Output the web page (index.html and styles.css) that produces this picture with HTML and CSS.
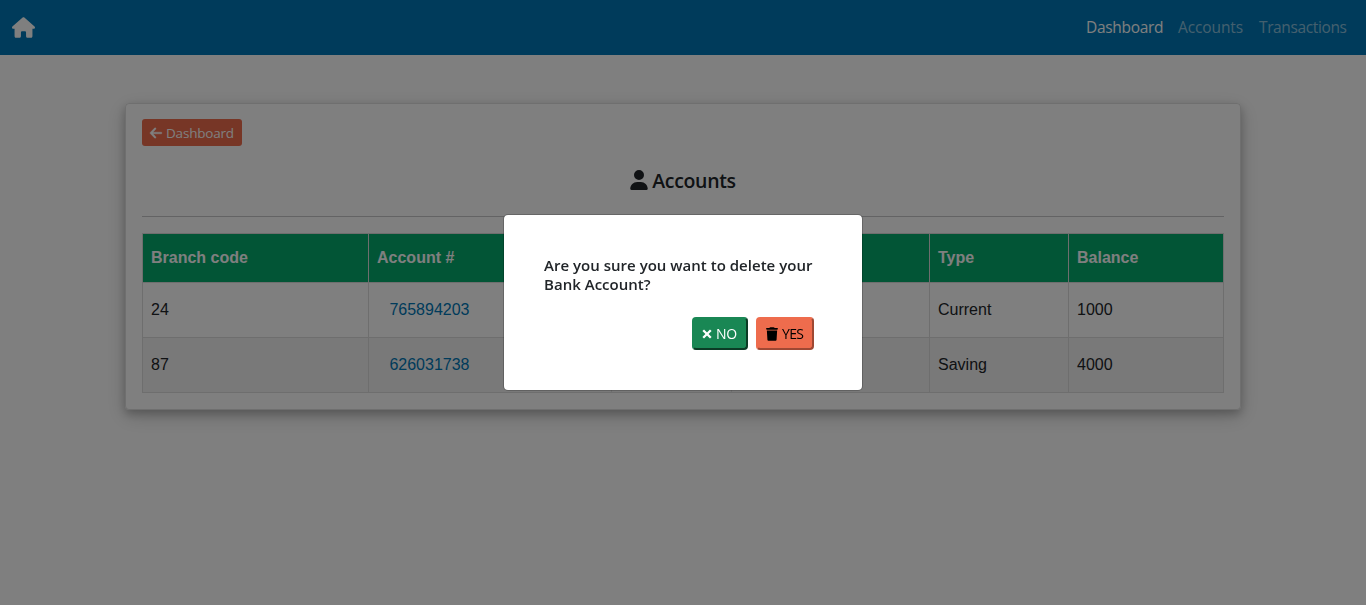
FILE: index.html
```html
<!DOCTYPE html>
<html lang="en">
<head>
<meta charset="utf-8">
<title>Accounts</title>
<link rel="stylesheet" href="styles.css">
</head>
<body>
<nav class="navbar">
  <svg class="home" viewBox="0 0 576 512" fill="currentColor"><path d="M575.8 255.5c0 18-15 32.1-32 32.1h-32l.7 160.2c0 2.7-.2 5.4-.5 8.1V472c0 22.1-17.9 40-40 40H456c-1.1 0-2.2 0-3.3-.1c-1.4 .1-2.8 .1-4.2 .1H416 392c-22.1 0-40-17.9-40-40V448 384c0-17.7-14.3-32-32-32H256c-17.7 0-32 14.3-32 32v64 24c0 22.1-17.9 40-40 40H160 128.1c-1.5 0-3-.1-4.5-.2c-1.2 .1-2.4 .2-3.6 .2H104c-22.1 0-40-17.9-40-40V360c0-.9 0-1.9 .1-2.8V287.6H32c-18 0-32-14-32-32.1c0-9 3-17 10-24L266.4 8c7-7 15-8 22-8s15 2 21 7L564.8 231.5c8 7 12 15 11 24z"/></svg>
  <div class="links">
    <a class="link active">Dashboard</a>
    <a class="link accounts">Accounts</a>
    <a class="link transactions">Transactions</a>
  </div>
</nav>
<main class="card">
  <a class="back"><svg class="arrow" viewBox="0 0 448 512" fill="currentColor"><path stroke="currentColor" stroke-width="14" d="M9.4 233.4c-12.5 12.5-12.5 32.8 0 45.3l160 160c12.5 12.5 32.8 12.5 45.3 0s12.5-32.8 0-45.3L109.2 288 416 288c17.7 0 32-14.3 32-32s-14.3-32-32-32l-306.7 0L214.6 118.6c12.5-12.5 12.5-32.8 0-45.3s-32.8-12.5-45.3 0l-160 160z"/></svg><span>Dashboard</span></a>
  <h1 class="title"><svg class="user" viewBox="0 0 448 512" fill="currentColor"><path d="M224 256a128 128 0 1 0 0-256a128 128 0 1 0 0 256zm-45.7 48C79.8 304 0 383.8 0 482.3C0 498.7 13.3 512 29.7 512H418.3c16.4 0 29.7-13.3 29.7-29.7C448 383.8 368.2 304 269.7 304H178.3z"/></svg><span>Accounts</span></h1>
  <hr class="rule">
  <table class="table">
    <colgroup><col class="c-branch"><col class="c-number"><col class="c-mid"><col class="c-wide"><col class="c-type"><col class="c-balance"></colgroup>
    <thead><tr><th>Branch code</th><th>Account #</th><th></th><th></th><th>Type</th><th>Balance</th></tr></thead>
    <tbody>
      <tr><td>24</td><td><a class="number">765894203</a></td><td></td><td></td><td>Current</td><td>1000</td></tr>
      <tr><td>87</td><td><a class="number">626031738</a></td><td></td><td></td><td>Saving</td><td>4000</td></tr>
    </tbody>
  </table>
</main>
<div class="overlay">
  <div class="modal">
    <p class="question">Are you sure you want to delete your<br>Bank Account?</p>
    <div class="actions">
      <button class="btn no"><svg class="cross" viewBox="0 0 10 10"><path d="M1.2 1.2L8.8 8.8M8.8 1.2L1.2 8.8" stroke="currentColor" stroke-width="2.3"/></svg><span>NO</span></button>
      <button class="btn yes"><svg class="trash" viewBox="0 0 448 512" fill="currentColor"><path d="M135.2 17.7L128 32H32C14.3 32 0 46.3 0 64S14.3 96 32 96H416c17.7 0 32-14.3 32-32s-14.3-32-32-32H320l-7.2-14.3C307.4 6.8 296.3 0 284.2 0H163.8c-12.1 0-23.2 6.8-28.6 17.7zM416 128H32L53.2 467c1.6 25.3 22.6 45 47.9 45H346.9c25.3 0 46.3-19.7 47.9-45L416 128z"/></svg><span>YES</span></button>
    </div>
  </div>
</div>
</body>
</html>
```
FILE: styles.css
```css
* { box-sizing: border-box; }
html { background: #fff; }
body { margin: 0; min-height: 100vh; color: #212529; font: 16px "Open Sans", "Noto Sans", sans-serif; }
svg { display: block; flex: none; }
.navbar { height: 55px; padding: 0 20px 0 12px; background: #0077b6; display: flex; align-items: center; justify-content: space-between; }
.home { width: 23px; height: 21px; color: #fff; }
.links { display: flex; gap: 16px; margin-top: -1px; }
.link { color: rgba(255,255,255,.55); font-size: 15.5px; line-height: 24px; white-space: nowrap; width: 65px; letter-spacing: -.12px; }
.link.active { color: #fff; width: 76px; letter-spacing: -.32px; }
.link.transactions { width: 87px; letter-spacing: -.38px; }
.card { width: 1116px; height: 307px; margin: 48px auto 0; padding: 15px 16px; border: 1px solid rgba(0,0,0,.125); border-radius: 4px; box-shadow: 0 4px 8px 0 rgba(0,0,0,.2), 0 6px 20px 0 rgba(0,0,0,.19); }
.back { display: flex; align-items: center; gap: 4px; width: 100px; height: 27px; padding: 0 8px; border-radius: 3px; background: #ee6c4d; color: #fff; font-size: 13.5px; letter-spacing: -.2px; white-space: nowrap; }
.arrow { width: 12px; height: 14px; overflow: visible; }
.title { display: flex; justify-content: center; align-items: center; gap: 4px; height: 24px; margin: 22px 0 24px; font-size: 19.5px; font-weight: 600; letter-spacing: -.35px; }
.user { width: 18px; height: 20px; }
.rule { border: 0; height: 1px; background: #c6c7c8; margin: 0 0 16px; }
.table { width: 1082px; table-layout: fixed; border-collapse: collapse; font-family: "Liberation Sans", Arial, sans-serif; }
.table th, .table td { border: 1px solid #ddd; padding: 0 8px; text-align: left; }
.table th { height: 49px; background: #04aa6d; color: #fff; }
.table td { height: 55px; }
.table tbody tr:nth-child(even) { background: #f2f2f2; }
.c-branch { width: 226px; }
.c-number { width: 243px; }
.c-mid { width: 120px; }
.c-wide { width: 198px; }
.c-type { width: 139px; }
.c-balance { width: 155px; }
.number { color: #0077b6; padding-left: 12.4px; }
.overlay { position: fixed; inset: 0; background: rgba(0,0,0,.5); display: flex; align-items: center; justify-content: center; }
.modal { width: 360px; height: 177px; padding: 41px 48px 40px 40px; background: #fff; background-clip: padding-box; border: 1px solid rgba(0,0,0,.2); border-radius: 5px; }
.question { margin: 0; font-size: 15px; line-height: 19px; font-weight: 600; white-space: nowrap; letter-spacing: .02px; }
.actions { display: flex; justify-content: flex-end; gap: 8px; margin-top: 23px; }
.btn { display: flex; align-items: center; height: 33px; padding: 0 8px; border: 2px solid; border-radius: 4px; font: 14px "Open Sans", sans-serif; white-space: nowrap; letter-spacing: -.3px; }
.no { width: 56px; gap: 4px; background: #198754; color: #fff; border-color: #198754 #0b3b25 #0b3b25 #198754; }
.yes { width: 58px; gap: 4px; background: #ee6c4d; color: #000; border-color: #ee6c4d #9f4833 #9f4833 #ee6c4d; letter-spacing: -.7px; }
.cross { width: 10px; height: 10px; }
.trash { width: 12px; height: 14px; }
```
